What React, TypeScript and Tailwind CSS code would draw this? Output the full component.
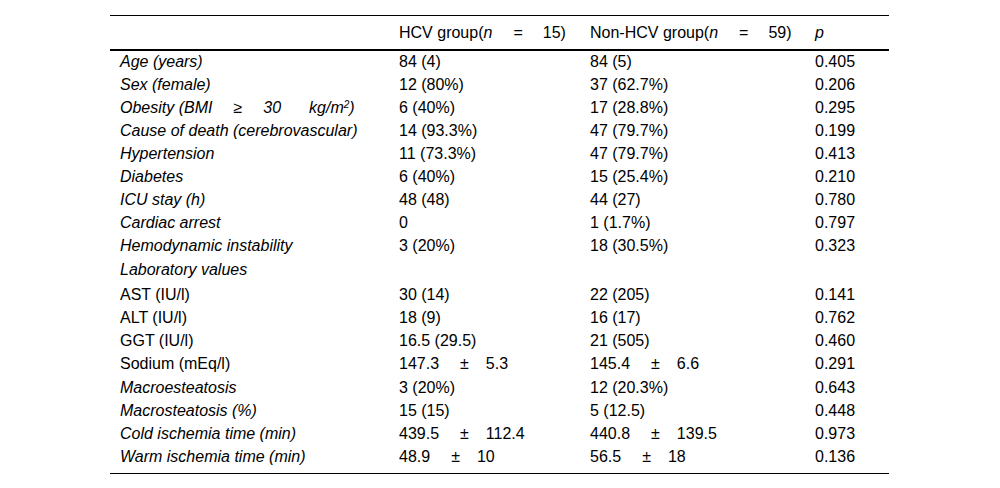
import type { ReactNode } from "react";

function PM({ a, b }: { a: string; b: string }) {
  return (
    <span>
      {a}
      <span className="ml-[21px] mr-[17px]">±</span>
      {b}
    </span>
  );
}

// label, italic, HCV, non-HCV, p, row height class
const data: [ReactNode, boolean, ReactNode, ReactNode, string, string][] = [
  ["Age (years)", true, "84 (4)", "84 (5)", "0.405", "h-[23px]"],
  ["Sex (female)", true, "12 (80%)", "37 (62.7%)", "0.206", "h-[23px]"],
  [
    <span>
      Obesity (BMI<span className="mx-[21px]">≥</span>30<span className="ml-[28px]">kg/m</span>
      <sup className="text-[10px]">2</sup>)
    </span>,
    true,
    "6 (40%)",
    "17 (28.8%)",
    "0.295",
    "h-[23px]",
  ],
  ["Cause of death (cerebrovascular)", true, "14 (93.3%)", "47 (79.7%)", "0.199", "h-[23px]"],
  ["Hypertension", true, "11 (73.3%)", "47 (79.7%)", "0.413", "h-[23px]"],
  ["Diabetes", true, "6 (40%)", "15 (25.4%)", "0.210", "h-[23px]"],
  ["ICU stay (h)", true, "48 (48)", "44 (27)", "0.780", "h-[23px]"],
  ["Cardiac arrest", true, "0", "1 (1.7%)", "0.797", "h-[23px]"],
  ["Hemodynamic instability", true, "3 (20%)", "18 (30.5%)", "0.323", "h-[23px]"],
  ["Laboratory values", true, "", "", "", "h-[26px]"],
  ["AST (IU/l)", false, "30 (14)", "22 (205)", "0.141", "h-[23px]"],
  ["ALT (IU/l)", false, "18 (9)", "16 (17)", "0.762", "h-[23px]"],
  ["GGT (IU/l)", false, "16.5 (29.5)", "21 (505)", "0.460", "h-[23px]"],
  ["Sodium (mEq/l)", false, <PM a="147.3" b="5.3" />, <PM a="145.4" b="6.6" />, "0.291", "h-[24px]"],
  ["Macroesteatosis", true, "3 (20%)", "12 (20.3%)", "0.643", "h-[23px]"],
  ["Macrosteatosis (%)", true, "15 (15)", "5 (12.5)", "0.448", "h-[23px]"],
  ["Cold ischemia time (min)", true, <PM a="439.5" b="112.4" />, <PM a="440.8" b="139.5" />, "0.973", "h-[23px]"],
  ["Warm ischemia time (min)", true, <PM a="48.9" b="10" />, <PM a="56.5" b="18" />, "0.136", "h-[23px]"],
];

function Eq({ n }: { n: string }) {
  return (
    <>
      <span className="italic">n</span>
      <span className="ml-[21px] mr-[20px]">=</span>
      {n})
    </>
  );
}

export default function App() {
  return (
    <div className="w-[1000px] h-[488px] bg-white pt-[15px] font-['Liberation_Sans',Arial,sans-serif] text-[16px] text-black">
      <div className="ml-[110px] w-[779px] border-y border-black pb-[5px]">
        <table className="w-full table-fixed border-collapse">
          <colgroup>
            <col className="w-[279px]" />
            <col className="w-[191px]" />
            <col className="w-[225px]" />
            <col />
          </colgroup>
          <thead>
            <tr className="h-[34px] border-b-2 border-black leading-none">
              <th />
              <th className="pl-[10px] text-left font-normal whitespace-nowrap">
                HCV group(<Eq n="15" />
              </th>
              <th className="pl-[10px] text-left font-normal whitespace-nowrap">
                Non-HCV group(<Eq n="59" />
              </th>
              <th className="pl-[10px] text-left font-normal italic">p</th>
            </tr>
          </thead>
          <tbody>
            {data.map(([label, it, h, n, p, hc], i) => (
              <tr key={i} className={`${hc} leading-none`}>
                <td className={`pl-[10px] whitespace-nowrap ${it ? "italic" : ""}`}>{label}</td>
                <td className="pl-[10px] whitespace-nowrap">{h}</td>
                <td className="pl-[10px] whitespace-nowrap">{n}</td>
                <td className="pl-[10px]">{p}</td>
              </tr>
            ))}
          </tbody>
        </table>
      </div>
    </div>
  );
}
